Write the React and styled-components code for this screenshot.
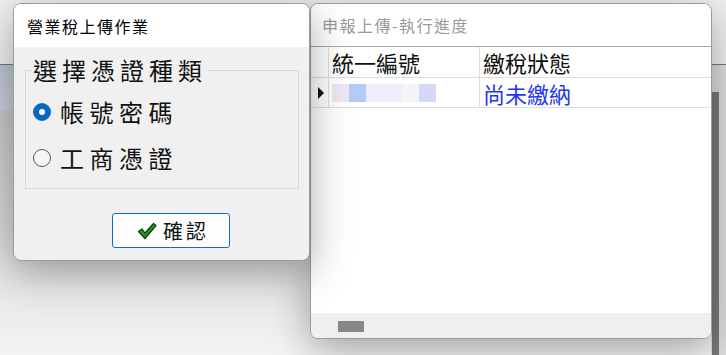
import styled, { createGlobalStyle } from 'styled-components';

const GlobalStyle = createGlobalStyle`
    html, body {
        margin: 0;
        padding: 0;
        background: #f0f0f0;
    }
    body {
        font-family: "Noto Sans CJK TC", "Noto Sans", sans-serif;
    }
`

const Desktop = styled.div`
    position: relative;
    width: 726px;
    height: 355px;
    overflow: hidden;
    background: linear-gradient(180deg, #b4b4b4 0%, #d8d8d8 60%, #f4f4f4 100%);
`

// app behind the two dialogs
const BackToolbar = styled.div`
    position: absolute;
    left: 0;
    top: 0;
    width: 726px;
    height: 64px;
    background: #f1f1f1;
    border-bottom: 1px solid #777;
`

const BackPanel = styled.div`
    position: absolute;
    left: 0;
    top: 65px;
    width: 40px;
    height: 45px;
    background: linear-gradient(180deg, #bcc6d3, #c9d0da);
`

const BackSide = styled.div`
    position: absolute;
    left: 711px;
    top: 65px;
    width: 15px;
    height: 290px;
    background: #dedede;
`

const BackScroll = styled.div`
    position: absolute;
    left: 712px;
    top: 92px;
    width: 7px;
    height: 263px;
    background: #7a7a7a;
`

const Window = styled.div`
    position: absolute;
    left: ${p => p.$x}px;
    top: ${p => p.$y}px;
    width: ${p => p.$w}px;
    height: ${p => p.$h}px;
    z-index: ${p => p.$z};
    display: flex;
    flex-direction: column;
    box-sizing: border-box;
    border: 1px solid #9c9c9c;
    border-radius: 8px;
    overflow: hidden;
    background: #f0f0f0;
    box-shadow: 0 10px 40px rgba(0, 0, 0, 0.34);
`

const TitleBar = styled.div`
    flex: none;
    height: ${p => p.$h}px;
    display: flex;
    align-items: center;
    padding-left: ${p => p.$pad}px;
    background: #fff;
    color: ${p => p.$muted ? '#9a9a9a' : '#000'};
    font-size: 16px;
    letter-spacing: 1.5px;
    border-bottom: ${p => p.$line ? '1px solid #a9a9a9' : 'none'};
`

const DialogBody = styled.div`
    flex: 1;
    display: flex;
    flex-direction: column;
    padding: 10px 10px 0 11px;
`

const GroupBox = styled.fieldset`
    margin: 0;
    height: 132px;
    box-sizing: border-box;
    border: 1px solid #d9d9d9;
    padding: 15px 0 0 7px;
    display: flex;
    flex-direction: column;
    gap: 18px;
`

const Legend = styled.legend`
    padding: 0 1px;
    margin-left: -1px;
    font-size: 24px;
    line-height: 26px;
    letter-spacing: 5px;
    color: #111;
`

const RadioRow = styled.label`
    display: flex;
    align-items: center;
    gap: 9px;
    font-size: 24px;
    line-height: 28px;
    letter-spacing: 5.5px;
    color: #111;
`

const RadioDot = styled.span`
    flex: none;
    width: 18px;
    height: 18px;
    box-sizing: border-box;
    border-radius: 50%;
    background: ${p => p.$on ? '#fff' : '#f6f6f6'};
    border: ${p => p.$on ? '6px solid #0a67c2' : '1px solid #585858'};
`

const ButtonRow = styled.div`
    display: flex;
    padding: 24px 0 0 87px;
`

const OkButton = styled.button`
    width: 118px;
    height: 35px;
    display: flex;
    align-items: center;
    justify-content: center;
    gap: 6px;
    padding: 0 0 0 4px;
    background: #fdfdfd;
    border: 1px solid #0a6fd0;
    border-radius: 3px;
    font-family: "Noto Sans CJK TC", sans-serif;
    font-size: 20px;
    letter-spacing: 3px;
    color: #111;
`

const GridArea = styled.div`
    flex: 1;
    background: #fff;
    display: flex;
    flex-direction: column;
`

const GridRow = styled.div`
    display: grid;
    grid-template-columns: 18px 151px 1fr;
    height: ${p => p.$h}px;
    border-bottom: 1px solid #dedede;
`

const Cell = styled.div`
    display: flex;
    align-items: center;
    padding-left: 3px;
    border-right: ${p => p.$last ? 'none' : '1px solid #dedede'};
    font-size: 22px;
    color: ${p => p.$blue ? '#2336f2' : '#111'};
    overflow: hidden;
    white-space: nowrap;
`

const RowHead = styled.div`
    display: flex;
    align-items: center;
    justify-content: center;
    border-right: 1px solid #dedede;
    background: #fff;
`

const Arrow = styled.span`
    width: 0;
    height: 0;
    margin-left: 2px;
    border-top: 6px solid transparent;
    border-bottom: 6px solid transparent;
    border-left: 6px solid #111;
`

const Redacted = styled.span`
    display: inline-block;
    width: ${p => p.$w}px;
    height: 18px;
    background: ${p => p.$c};
`

const HScroll = styled.div`
    flex: none;
    height: 25px;
    background: #efefef;
    display: flex;
    align-items: center;
    padding-left: 27px;
`

const Thumb = styled.div`
    width: 26px;
    height: 11px;
    background: #878787;
    margin-top: 2px;
`

const blocks = [
    { w: 17, c: '#ede7f4' },
    { w: 17, c: '#b3cbf7' },
    { w: 36, c: '#eeedf9' },
    { w: 17, c: '#f5f5f9' },
    { w: 17, c: '#d5d9f8' },
];

const Check = () => (
    <svg width="20" height="18" viewBox="0 0 20 18">
        <path d="M1.5 9.5 L5 7 L8 11 L16.5 1.5 L19 3.5 L8 16.5 Z"
              fill="#1e9b1e" stroke="#0b3d0b" strokeWidth="1.2" strokeLinejoin="round"/>
    </svg>
);

const App = () => {
    return (
        <Desktop>
            <GlobalStyle/>
            <BackToolbar/>
            <BackPanel/>
            <BackSide/>
            <BackScroll/>

            <Window $x={310} $y={3} $w={402} $h={336} $z={1}>
                <TitleBar $h={42} $pad={11} $muted $line>申報上傳-執行進度</TitleBar>
                <GridArea>
                    <GridRow $h={30}>
                        <RowHead/>
                        <Cell>統一編號</Cell>
                        <Cell $last>繳稅狀態</Cell>
                    </GridRow>
                    <GridRow $h={29}>
                        <RowHead><Arrow/></RowHead>
                        <Cell>
                            {blocks.map((b, i) => <Redacted key={i} $w={b.w} $c={b.c}/>)}
                        </Cell>
                        <Cell $last $blue>尚未繳納</Cell>
                    </GridRow>
                </GridArea>
                <HScroll><Thumb/></HScroll>
            </Window>

            <Window $x={13} $y={3} $w={297} $h={258} $z={2}>
                <TitleBar $h={43} $pad={13}>營業稅上傳作業</TitleBar>
                <DialogBody>
                    <GroupBox>
                        <Legend>選擇憑證種類</Legend>
                        <RadioRow><RadioDot $on/>帳號密碼</RadioRow>
                        <RadioRow><RadioDot/>工商憑證</RadioRow>
                    </GroupBox>
                    <ButtonRow>
                        <OkButton><Check/>確認</OkButton>
                    </ButtonRow>
                </DialogBody>
            </Window>
        </Desktop>
    );
}

export default App;
